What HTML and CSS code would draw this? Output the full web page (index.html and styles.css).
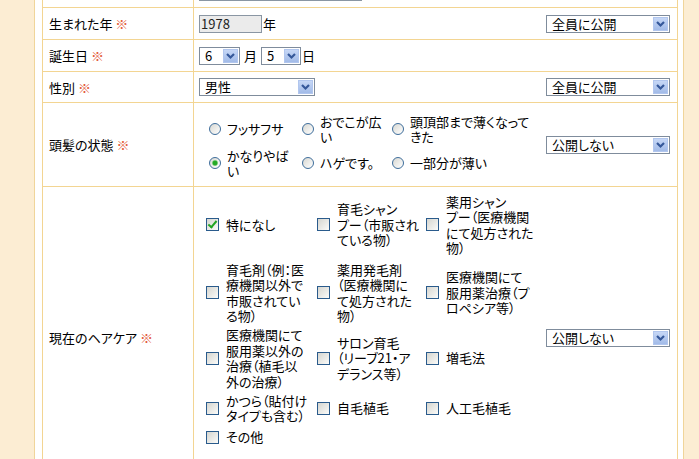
FILE: index.html
```html
<!DOCTYPE html>
<html lang="ja">
<head>
<meta charset="utf-8">
<title>プロフィール編集</title>
<link rel="stylesheet" href="styles.css">
</head>
<body>
<div class="panel">
<table class="form">
<colgroup><col class="c-label"><col></colgroup>
<tr>
  <th></th>
  <td><div class="line"><div class="main"><input class="text nick" type="text" value=""></div></div></td>
</tr>
<tr>
  <th>生まれた年 <span class="req">※</span></th>
  <td><div class="line">
    <div class="main"><input class="text year" type="text" value="1978" readonly><span class="unit-tight">年</span></div>
    <div class="pub"><span class="sel w-pub"><select><option>全員に公開</option></select><span class="btn"><svg viewBox="0 0 15 14" width="15" height="14"><path d="M4 5 L7.5 8.5 L11 5" fill="none" stroke="#35589a" stroke-width="2.2"/></svg></span></span></div>
  </div></td>
</tr>
<tr>
  <th>誕生日 <span class="req">※</span></th>
  <td><div class="line">
    <div class="main"><span class="sel w-m"><select><option>6</option></select><span class="btn"><svg viewBox="0 0 15 14" width="15" height="14"><path d="M4 5 L7.5 8.5 L11 5" fill="none" stroke="#35589a" stroke-width="2.2"/></svg></span></span><span class="unit">月</span><span class="sel w-d"><select><option>5</option></select><span class="btn"><svg viewBox="0 0 15 14" width="15" height="14"><path d="M4 5 L7.5 8.5 L11 5" fill="none" stroke="#35589a" stroke-width="2.2"/></svg></span></span><span class="unit-tight">日</span></div>
  </div></td>
</tr>
<tr>
  <th>性別 <span class="req">※</span></th>
  <td><div class="line">
    <div class="main"><span class="sel w-sex"><select><option>男性</option></select><span class="btn"><svg viewBox="0 0 15 14" width="15" height="14"><path d="M4 5 L7.5 8.5 L11 5" fill="none" stroke="#35589a" stroke-width="2.2"/></svg></span></span></div>
    <div class="pub"><span class="sel w-pub"><select><option>全員に公開</option></select><span class="btn"><svg viewBox="0 0 15 14" width="15" height="14"><path d="M4 5 L7.5 8.5 L11 5" fill="none" stroke="#35589a" stroke-width="2.2"/></svg></span></span></div>
  </div></td>
</tr>
<tr>
  <th>頭髪の状態 <span class="req">※</span></th>
  <td><div class="line">
    <div class="main hair">
      <div class="radios">
        <label class="opt"><input type="radio" name="hair"><span>フッサフサ</span></label>
        <label class="opt"><input type="radio" name="hair"><span>おでこが広<br>い</span></label>
        <label class="opt"><input type="radio" name="hair"><span>頭頂部まで薄くなって<br>きた</span></label>
        <label class="opt"><input type="radio" name="hair" checked><span>かなりやば<br>い</span></label>
        <label class="opt"><input type="radio" name="hair"><span>ハゲです。</span></label>
        <label class="opt"><input type="radio" name="hair"><span>一部分が薄い</span></label>
      </div>
    </div>
    <div class="pub"><span class="sel w-pub"><select><option>公開しない</option></select><span class="btn"><svg viewBox="0 0 15 14" width="15" height="14"><path d="M4 5 L7.5 8.5 L11 5" fill="none" stroke="#35589a" stroke-width="2.2"/></svg></span></span></div>
  </div></td>
</tr>
<tr>
  <th>現在のヘアケア <span class="req">※</span></th>
  <td><div class="line">
    <div class="main care">
      <div class="checks">
        <label class="opt"><input type="checkbox" checked><span>特になし</span></label>
        <label class="opt"><input type="checkbox"><span>育毛シャン<br>プー（市販され<br>ている物）</span></label>
        <label class="opt"><input type="checkbox"><span>薬用シャン<br>プー（医療機関<br>にて処方された<br>物）</span></label>
        <label class="opt"><input type="checkbox"><span>育毛剤（例：医<br>療機関以外で<br>市販されてい<br>る物）</span></label>
        <label class="opt"><input type="checkbox"><span>薬用発毛剤<br>（医療機関に<br>て処方された<br>物）</span></label>
        <label class="opt"><input type="checkbox"><span>医療機関にて<br>服用薬治療（プ<br>ロペシア等）</span></label>
        <label class="opt"><input type="checkbox"><span>医療機関にて<br>服用薬以外の<br>治療（植毛以<br>外の治療）</span></label>
        <label class="opt"><input type="checkbox"><span>サロン育毛<br>（リーブ21・ア<br>デランス等）</span></label>
        <label class="opt"><input type="checkbox"><span>増毛法</span></label>
        <label class="opt"><input type="checkbox"><span>かつら（貼付け<br>タイプも含む）</span></label>
        <label class="opt"><input type="checkbox"><span>自毛植毛</span></label>
        <label class="opt"><input type="checkbox"><span>人工毛植毛</span></label>
        <label class="opt"><input type="checkbox"><span>その他</span></label>
      </div>
    </div>
    <div class="pub"><span class="sel w-pub"><select><option>公開しない</option></select><span class="btn"><svg viewBox="0 0 15 14" width="15" height="14"><path d="M4 5 L7.5 8.5 L11 5" fill="none" stroke="#35589a" stroke-width="2.2"/></svg></span></span></div>
  </div></td>
</tr>
</table>
</div>
</body>
</html>
```

FILE: styles.css
```css
html, body {
  margin: 0;
  padding: 0;
}
body {
  background: #fcedd3;
  font-family: "Noto Sans CJK JP", "Noto Sans", sans-serif;
  font-size: 13px;
  font-feature-settings: "palt";
  color: #000;
  height: 459px;
  overflow: hidden;
}
.panel {
  margin: -24px 0 0 34px;
  width: 636px;
  min-height: 560px;
  padding: 0 5px 0 7px;
  background: #fff;
  border-left: 1px solid #f0d59a;
  border-right: 1px solid #f0d59a;
}
.form {
  border-collapse: collapse;
  table-layout: fixed;
  width: 636px;
}
.c-label {
  width: 151px;
}
.form th,
.form td {
  border: 1px solid #f3d592;
  vertical-align: middle;
}
.form th {
  text-align: left;
  font-weight: normal;
  padding: 0 6px;
  white-space: nowrap;
}
.form td {
  padding: 0;
}
.req {
  color: #e35a38;
}
.line {
  display: flex;
  justify-content: space-between;
  align-items: stretch;
}
.main {
  display: flex;
  align-items: center;
  padding: 6px 0 6px 5px;
}
.pub {
  display: flex;
  align-items: center;
  padding-right: 7px;
}
.text {
  box-sizing: border-box;
  height: 18px;
  margin: 0;
  padding: 0 1px;
  border: 1px solid #8a96a3;
  font: inherit;
  font-size: 13px;
  color: #222;
  border-radius: 0;
}
.nick {
  width: 163px;
}
.year {
  width: 63px;
  background: #ebebeb;
}
.unit {
  margin: 0 4px;
}
.unit-tight {
  margin-left: 1px;
}
.sel {
  position: relative;
  display: inline-block;
  height: 18px;
}
.sel select {
  -webkit-appearance: none;
  appearance: none;
  display: block;
  box-sizing: border-box;
  width: 100%;
  height: 18px;
  margin: 0;
  padding: 0 0 0 5px;
  border: 1px solid #7f8c9c;
  border-radius: 0;
  background: #fff;
  font: inherit;
  font-size: 13px;
  line-height: 16px;
  color: #000;
}
.btn {
  position: absolute;
  top: 2px;
  right: 2px;
  width: 15px;
  height: 14px;
  box-sizing: border-box;
  background: linear-gradient(#c6d7f6, #a2bbe8);
  border: 1px solid #b1c6ee;
  pointer-events: none;
}
.btn svg {
  position: absolute;
  left: -1px;
  top: -1px;
}
.w-pub { width: 124px; }
.w-m { width: 41px; }
.w-d { width: 40px; }
.w-sex { width: 116px; }

.opt {
  display: flex;
  align-items: center;
  white-space: nowrap;
  line-height: 15.5px;
}
.hair {
  padding: 9px 0 6px 5px;
}
.radios {
  display: grid;
  grid-template-columns: 93px 90px auto;
  grid-auto-rows: 34px;
  padding-left: 10px;
}
.radios input {
  -webkit-appearance: none;
  appearance: none;
  flex: none;
  width: 12px;
  height: 12px;
  margin: 0 6px 0 0;
  border: 1px solid #3f6e9c;
  border-radius: 50%;
  background: linear-gradient(135deg, #d8d8d2, #ffffff);
}
.radios input:checked {
  background:
    radial-gradient(circle, #25a925 0 2px, #7fd07f 2.6px, transparent 3.4px),
    linear-gradient(135deg, #d8d8d2, #ffffff);
}
.care {
  padding: 3px 0 40px 5px;
}
.checks {
  display: grid;
  grid-template-columns: 111px 109px 110px;
  grid-template-rows: 69px 67px 64px 36px 22px;
  padding-left: 7px;
}
.checks input {
  -webkit-appearance: none;
  appearance: none;
  position: relative;
  flex: none;
  box-sizing: border-box;
  width: 13px;
  height: 13px;
  margin: 0 7px 0 0;
  border: 1px solid #2a5b8c;
  border-radius: 0;
  background: linear-gradient(135deg, #d6d6d0, #fbfbf9);
}
.checks input:checked::after {
  content: "";
  position: absolute;
  left: 3px;
  top: 0px;
  width: 3px;
  height: 7px;
  border: solid #22a522;
  border-width: 0 2px 2px 0;
  transform: rotate(40deg);
}
```
